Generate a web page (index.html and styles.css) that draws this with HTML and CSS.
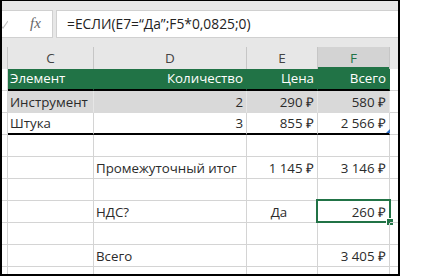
FILE: index.html
```html
<!DOCTYPE html>
<html lang="ru">
<head>
  <meta charset="UTF-8" />
  <title>Расчёт НДС</title>
  <link rel="stylesheet" href="styles.css">
</head>
<body>
  <div class="frame">
    <!-- Formula bar -->
    <div class="fbar">
      <div class="namebox">
        <svg class="check" width="6" height="10" viewBox="0 0 6 10"><path d="M-2 5 L1 8 L6 1" fill="none" stroke="#c4c4c4" stroke-width="1.2"/></svg>
        <span class="fx">fx</span>
      </div>
      <div class="formula">=ЕСЛИ(E7=“Да”;F5*0,0825;0)</div>
    </div>

    <!-- Sheet -->
    <div class="sheet">
      <div class="ch"></div>
      <div class="ch">C</div>
      <div class="ch">D</div>
      <div class="ch">E</div>
      <div class="ch ch-sel">F</div>
      <div class="ch ch-last"></div>

      <div class="c"></div>
      <div class="c th">Элемент</div>
      <div class="c th num">Количество</div>
      <div class="c th num">Цена</div>
      <div class="c th num">Всего</div>
      <div class="c last"></div>

      <div class="c"></div>
      <div class="c band">Инструмент</div>
      <div class="c band num">2</div>
      <div class="c band num">290 ₽</div>
      <div class="c band num">580 ₽</div>
      <div class="c last"></div>

      <div class="c"></div>
      <div class="c endrow">Штука</div>
      <div class="c endrow num">3</div>
      <div class="c endrow num">855 ₽</div>
      <div class="c endrow num corner">2 566 ₽</div>
      <div class="c last"></div>

      <div class="c"></div><div class="c"></div><div class="c"></div><div class="c"></div><div class="c"></div><div class="c last"></div>

      <div class="c"></div>
      <div class="c"></div>
      <div class="c">Промежуточный итог</div>
      <div class="c num">1 145 ₽</div>
      <div class="c num">3 146 ₽</div>
      <div class="c last"></div>

      <div class="c"></div><div class="c"></div><div class="c"></div><div class="c"></div><div class="c"></div><div class="c last"></div>

      <div class="c"></div>
      <div class="c"></div>
      <div class="c">НДС?</div>
      <div class="c mid">Да</div>
      <div class="c num active">260 ₽</div>
      <div class="c last"></div>

      <div class="c"></div><div class="c"></div><div class="c"></div><div class="c"></div><div class="c"></div><div class="c last"></div>

      <div class="c"></div>
      <div class="c"></div>
      <div class="c">Всего</div>
      <div class="c"></div>
      <div class="c num">3 405 ₽</div>
      <div class="c last"></div>

      <div class="c"></div><div class="c"></div><div class="c"></div><div class="c"></div><div class="c"></div><div class="c last"></div>
    </div>
  </div>
</body>
</html>
```

FILE: styles.css
```css
body {
  margin: 0;
  background: #fff;
  font-family: "Open Sans", sans-serif;
  color: #2b2b2b;
}

.frame {
  width: 400px;
  height: 276px;
  box-sizing: border-box;
  border: 2px solid #000;
  border-top-width: 1px;
  overflow: hidden;
  background: #fff;
}

/* formula bar */
.fbar {
  height: 46px;
  box-sizing: border-box;
  padding-top: 9px;
  background: #e7e7e7;
  display: flex;
  gap: 3px;
}

.namebox {
  position: relative;
  width: 51px;
  height: 28px;
  box-sizing: border-box;
  background: #fff;
  border: 1px solid #d0d0d0;
  border-left: none;
}

.check {
  position: absolute;
  left: 0;
  top: 9px;
}

.fx {
  position: absolute;
  left: 28px;
  top: 4px;
  font-family: "Liberation Serif", serif;
  font-style: italic;
  font-size: 15px;
  color: #666;
}

.formula {
  flex: 1;
  height: 28px;
  box-sizing: border-box;
  background: #fff;
  border: 1px solid #d0d0d0;
  border-right: none;
  padding-left: 10px;
  font-size: 13.8px;
  line-height: 26px;
  color: #222;
}

/* grid of cells */
.sheet {
  display: grid;
  grid-template-columns: 6px 86px 153px 71px 72px 1fr;
  grid-auto-rows: 22px;
  font-size: 13.3px;
}

.ch {
  background: #e7e7e7;
  border-right: 1px solid #c6c6c6;
  text-align: center;
  line-height: 22px;
  color: #444;
  font-size: 13.5px;
}

.ch-sel {
  background: #d3d3d3;
  color: #217346;
  box-shadow: inset 0 -2px 0 #217346;
}

.ch-last {
  border-right: none;
}

.c {
  position: relative;
  box-sizing: border-box;
  border-right: 1px solid #d4d4d4;
  border-bottom: 1px solid #d4d4d4;
  padding: 0 3px 0 2px;
  line-height: 22px;
  white-space: nowrap;
}

.c.last {
  border-right: none;
}

.num {
  text-align: right;
}

.mid {
  text-align: center;
  padding-right: 8px;
}

.th {
  background: #217346;
  color: #fff;
  border-right-color: #217346;
  border-bottom: 2px solid #000;
  line-height: 19px;
}

.band {
  background: #d9d9d9;
  border-right-color: #e6e6e6;
  border-bottom-color: #d9d9d9;
}

.endrow {
  border-bottom: 2px solid #000;
  line-height: 21px;
}

/* table resize handle */
.corner::after {
  content: "";
  position: absolute;
  right: -1px;
  bottom: 0;
  border-left: 4px solid transparent;
  border-bottom: 4px solid #2b6cc4;
}

/* current cell */
.active::before {
  content: "";
  position: absolute;
  left: -2px;
  top: -2px;
  right: -2px;
  bottom: -1px;
  border: 2px solid #217346;
}

.active::after {
  content: "";
  position: absolute;
  right: -5px;
  bottom: -4px;
  width: 6px;
  height: 6px;
  background: #217346;
  border: 1px solid #fff;
}
```
